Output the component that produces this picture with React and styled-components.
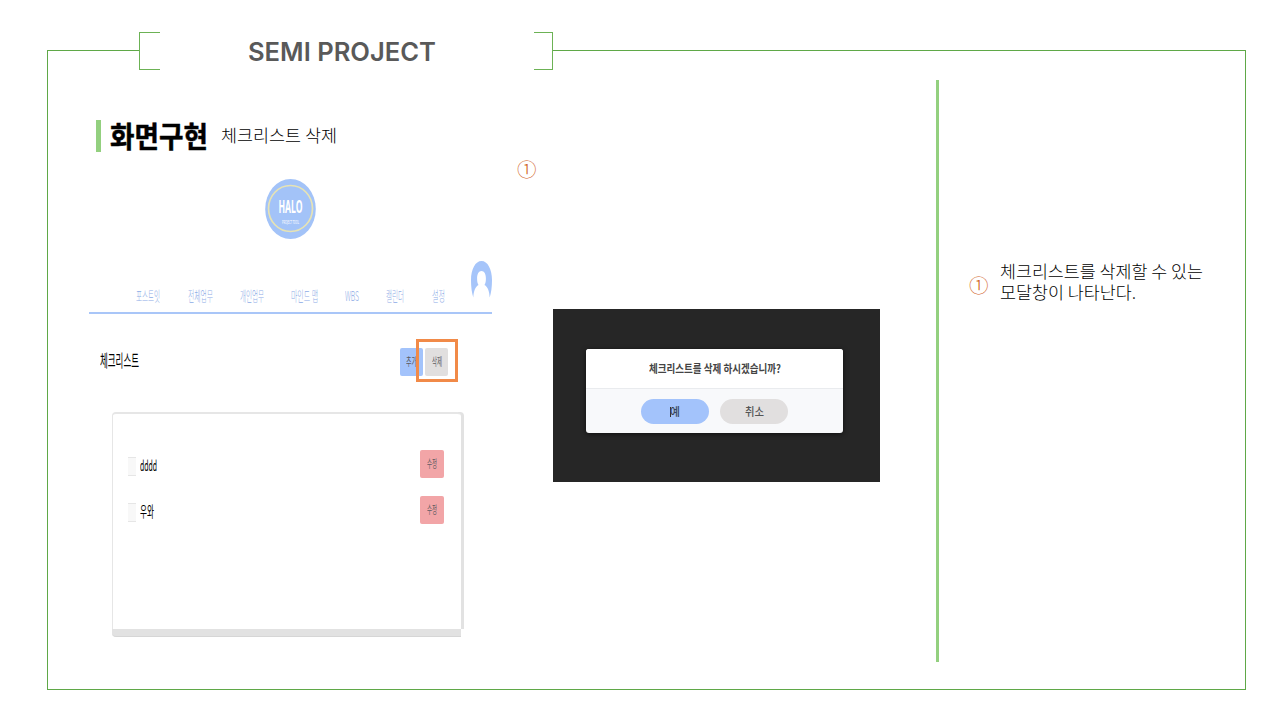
import React, { useLayoutEffect, useRef, useState } from "react";
import styled, { createGlobalStyle } from "styled-components";

const Global = createGlobalStyle`
  *, *::before, *::after { box-sizing: border-box; }
  body {
    margin: 0;
    background: #fff;
    color: #000;
    font-family: "Noto Sans CJK KR", "Noto Sans", sans-serif;
  }
`;

const Slide = styled.main`
  width: 1280px;
  height: 720px;
  padding: 32px 34px 30px 47px;
  display: flex;
  flex-direction: column;
  background: #fff;
  overflow: hidden;
`;

const Header = styled.header`
  height: 38px;
  display: flex;
  flex: none;
`;

const Rule = styled.div`
  flex: ${(p) => (p.$w ? `0 0 ${p.$w}px` : "1")};
  height: 1px;
  margin-top: 18px;
  background: #5fa848;
`;

const Bracket = styled.div`
  width: ${(p) => (p.$right ? 19 : 21)}px;
  border: solid #6cb255;
  border-width: ${(p) => (p.$right ? "1px 1px 1px 0" : "1px 0 1px 1px")};
`;

const TitleBox = styled.div`
  width: 374px;
  padding: 2px 0 0 88px;
  display: flex;
  align-items: center;
  font-family: Inter, sans-serif;
`;

const Frame = styled.section`
  flex: 1;
  margin-top: -20px;
  padding: 30px 0 27px 41px;
  display: flex;
  border: solid #5fa848;
  border-width: 0 1px 1px 1px;
`;

const FitBox = styled.span`
  display: block;
  flex: none;
  width: ${(p) => p.$w}px;
  line-height: ${(p) => p.$lh || p.$size * 1.4}px;
  font-size: ${(p) => p.$size}px;
  font-weight: ${(p) => p.$weight || 400};
  color: ${(p) => p.$color || "inherit"};
  white-space: nowrap;
`;

const FitInner = styled.span`
  display: inline-block;
  transform-origin: 0 50%;
`;

/* Condenses or widens a line of text so that it fills a given width. */
function Fit({ w, size, weight, color, lh, children }) {
  const ref = useRef(null);
  const [scale, setScale] = useState(1);
  useLayoutEffect(() => {
    if (ref.current.offsetWidth) {
      const style = window.getComputedStyle(ref.current);
      setScale(w / parseFloat(style.width));
    }
  }, [w, size, children]);
  return (
    <FitBox $w={w} $size={size} $weight={weight} $color={color} $lh={lh}>
      <FitInner ref={ref} style={{ transform: `scaleX(${scale})` }}>
        {children}
      </FitInner>
    </FitBox>
  );
}

const Shots = styled.div`
  width: 847px;
  padding-top: 36px;
`;

const Heading = styled.div`
  height: 40px;
  margin-left: 7px;
  display: flex;
  align-items: center;
`;

const HeadingTitle = styled.div`
  padding-bottom: 1px;
  -webkit-text-stroke: 0.5px #000;
`;

const HeadingNote = styled.div`
  padding-bottom: 2px;
`;

const Accent = styled.i`
  width: 5px;
  height: 32px;
  margin-right: 9px;
  background: #93d07f;
`;

const Gap = styled.i`
  flex: 0 0 ${(p) => p.$w}px;
`;

const Columns = styled.div`
  display: flex;
`;

const AppShot = styled.div`
  width: 403px;
  padding-top: 23px;
`;

const LogoRow = styled.div`
  height: 60px;
  padding-left: 176px;
`;

const NavBar = styled.nav`
  height: 75px;
  padding-left: 47px;
  display: flex;
  align-items: flex-end;
  border-bottom: 2px solid #a9c6f8;
`;

const NavItem = styled.a`
  margin-right: ${(p) => p.$gap}px;
  padding-bottom: 8px;
`;

const Avatar = styled.svg`
  width: 21px;
  height: 37px;
  margin-bottom: 14px;
  display: block;
`;

const Toolbar = styled.div`
  height: 98px;
  padding: 34px 44px 0 11px;
  display: flex;
  align-items: flex-start;
`;

const ToolTitle = styled.div`
  flex: 1;
`;

const tones = { blue: "#a3c3fb", gray: "#e1dfdf", red: "#f2a5a7" };

const SmallButton = styled.button`
  width: ${(p) => (p.$tone === "red" ? 24 : 23)}px;
  height: 28px;
  padding: 0;
  border: 0;
  border-radius: 2px;
  display: flex;
  align-items: center;
  justify-content: center;
  font-family: inherit;
  color: #5b5960;
  background: ${(p) => tones[p.$tone]};
`;

const Marked = styled.div`
  position: relative;
  margin-left: 2px;
  &::after {
    content: "";
    position: absolute;
    left: -9px;
    top: -9px;
    width: 42px;
    height: 43px;
    border: 3px solid #f18a48;
  }
`;

const Card = styled.div`
  width: 352px;
  height: 225px;
  margin-left: 23px;
  padding-right: 3px;
  display: flex;
  flex-direction: column;
  background: linear-gradient(#e2e2e2, #e2e2e2) right top / 6px 217px no-repeat;
  border-radius: 4px;
`;

const CardFace = styled.div`
  height: 217px;
  padding: 36px 17px 0 15px;
  border: solid #e6e6e6;
  border-width: 2px 0 0 1px;
  border-radius: 4px 4px 0 0;
  background: #fff;
`;

const CardBase = styled.div`
  height: 8px;
  background: #e2e2e2;
  border-bottom: 1px solid #d6d6d6;
  border-radius: 0 0 0 4px;
`;

const Item = styled.div`
  height: 28px;
  margin-bottom: 18px;
  display: flex;
  align-items: center;
`;

const Check = styled.i`
  width: 8px;
  height: 19px;
  margin: 5px 4px 0 0;
  border: solid #e6e6e6;
  border-width: 1px 0;
  background: #f8f8f8;
`;

const ItemText = styled.div`
  flex: 1;
  padding-top: 1px;
`;

const ModalColumn = styled.div`
  margin-left: 25px;
  padding-top: 1px;
`;

const Marker = styled.span`
  display: block;
  width: 19px;
  font-size: 19.5px;
  line-height: 24px;
  font-weight: 300;
  color: #d0601c;
`;

const Backdrop = styled.div`
  width: 327px;
  height: 173px;
  margin: 128px 0 0 36px;
  padding: 40px 0 0 33px;
  background: #262626;
`;

const Dialog = styled.div`
  width: 257px;
  height: 84px;
  border-radius: 3px;
  overflow: hidden;
  background: #f8f9fb;
  box-shadow: 0 1px 5px #0009;
`;

const Question = styled.div`
  height: 40px;
  display: flex;
  align-items: center;
  justify-content: center;
  border-bottom: 1px solid #e9ebee;
  background: #fff;
`;

const Actions = styled.div`
  padding-top: 10px;
  display: flex;
  justify-content: center;
  gap: 11px;
`;

const Pill = styled.button`
  width: 68px;
  height: 25px;
  padding: 0;
  border: 0;
  border-radius: 13px;
  display: flex;
  align-items: center;
  justify-content: center;
  font-family: inherit;
  background: ${(p) => tones[p.$tone]};
`;

const Caret = styled.i`
  width: 1px;
  height: 10px;
  margin-right: -1px;
  background: #333;
`;

const Divider = styled.div`
  width: 3px;
  background: #93d07f;
`;

const Notes = styled.aside`
  padding: 181px 0 0 30px;
  display: flex;
  align-items: flex-start;
`;

const NoteMark = styled.div`
  padding: 12px 12px 0 0;
`;

const nav = [
  ["포스트잇", 24, 28],
  ["전체업무", 25, 27],
  ["개인업무", 24, 27],
  ["마인드 맵", 27, 27],
  ["WBS", 14, 27],
  ["캘린더", 18, 28],
  ["설정", 13, 26],
];

function Logo() {
  return (
    <svg width="51" height="60" viewBox="0 0 51 60" overflow="visible">
      <ellipse cx="25.5" cy="30" rx="25.3" ry="30" fill="#a3c3f8" />
      <ellipse cx="25.5" cy="29.5" rx="22" ry="23" fill="none" stroke="#e6e3b5" strokeWidth="1.7" />
      <text x="13.5" y="33.500" textLength="24" lengthAdjust="spacingAndGlyphs" fontSize="18.500" fontWeight="700" fill="#fff" fontFamily="Noto Sans, sans-serif">HALO</text>
      <text x="17" y="45" textLength="17" lengthAdjust="spacingAndGlyphs" fontSize="4.500" fill="#fff" fontFamily="Noto Sans, sans-serif">PROJECT TOOL</text>
    </svg>
  );
}

export default function App() {
  return (
    <>
      <Global />
      <Slide>
        <Header>
          <Rule $w={92} />
          <Bracket />
          <TitleBox>
            <Fit w={188} size={25.5} weight={600} color="#595959">SEMI PROJECT</Fit>
          </TitleBox>
          <Bracket $right />
          <Rule />
        </Header>
        <Frame>
          <Shots>
            <Heading>
              <Accent />
              <HeadingTitle>
                <Fit w={98} size={29} weight={700}>화면구현</Fit>
              </HeadingTitle>
              <Gap $w={13} />
              <HeadingNote>
                <Fit w={116} size={17} weight={300}>체크리스트 삭제</Fit>
              </HeadingNote>
            </Heading>
            <Columns>
              <AppShot>
                <LogoRow>
                  <Logo />
                </LogoRow>
                <NavBar>
                  {nav.map(([label, w, gap]) => (
                    <NavItem key={label} $gap={gap}>
                      <Fit w={w} size={13.5} lh={18} weight={300} color="#8dabe6">{label}</Fit>
                    </NavItem>
                  ))}
                  <Avatar viewBox="0 0 21 37">
                    <path
                      fill="#a6c5fa"
                      d="M2.300 36.500C.8 32 0 26 0 19 0 8 4.500 0 10.500 0S21 8 21 19c0 7-.8 13-2.300 17.500-.3-6-1.700-10.500-5.200-12.500 1.200-2 1.400-4 1.400-6.500 0-4.500-1.600-7.500-4.400-7.500s-4.400 3-4.400 7.500c0 2.500.2 4.500 1.400 6.500-3.500 2-4.900 6.500-5.200 12.500z"
                    />
                  </Avatar>
                </NavBar>
                <Toolbar>
                  <ToolTitle>
                    <Fit w={39} size={17} lh={24}>체크리스트</Fit>
                  </ToolTitle>
                  <SmallButton $tone="blue">
                    <Fit w={11} size={11}>추가</Fit>
                  </SmallButton>
                  <Marked>
                    <SmallButton $tone="gray">
                      <Fit w={10} size={11}>삭제</Fit>
                    </SmallButton>
                  </Marked>
                </Toolbar>
                <Card>
                  <CardFace>
                    {[["dddd", 17], ["우와", 14]].map(([label, w]) => (
                      <Item key={label}>
                        <Check />
                        <ItemText>
                          <Fit w={w} size={14.5} lh={20}>{label}</Fit>
                        </ItemText>
                        <SmallButton $tone="red">
                          <Fit w={10} size={11}>수정</Fit>
                        </SmallButton>
                      </Item>
                    ))}
                  </CardFace>
                  <CardBase />
                </Card>
              </AppShot>
              <ModalColumn>
                <Marker>①</Marker>
                <Backdrop>
                  <Dialog>
                    <Question>
                      <Fit w={132} size={11} weight={700} color="#444">체크리스트를 삭제 하시겠습니까?</Fit>
                    </Question>
                    <Actions>
                      <Pill $tone="blue">
                        <Caret />
                        <Fit w={10} size={11} weight={500} color="#39465a">예</Fit>
                      </Pill>
                      <Pill $tone="gray">
                        <Fit w={19} size={11} weight={500} color="#555">취소</Fit>
                      </Pill>
                    </Actions>
                  </Dialog>
                </Backdrop>
              </ModalColumn>
            </Columns>
          </Shots>
          <Divider />
          <Notes>
            <NoteMark>
              <Marker>①</Marker>
            </NoteMark>
            <div>
              <Fit w={203} size={16.5} lh={21} weight={300}>체크리스트를 삭제할 수 있는</Fit>
              <Fit w={136} size={16.5} lh={21} weight={300}>모달창이 나타난다.</Fit>
            </div>
          </Notes>
        </Frame>
      </Slide>
    </>
  );
}
